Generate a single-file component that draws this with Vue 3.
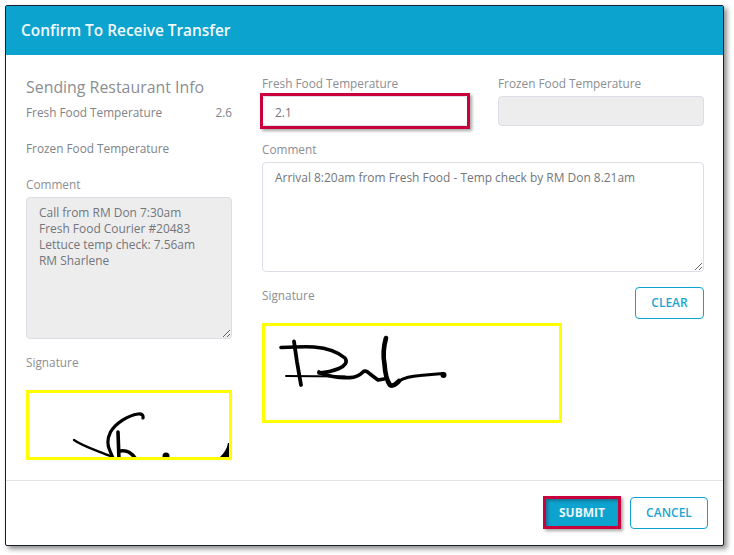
<script setup>
const sendingComment = `Call from RM Don 7:30am
Fresh Food Courier #20483
Lettuce temp check: 7.56am
RM Sharlene`
const receivingComment = 'Arrival 8:20am from Fresh Food - Temp check by RM Don 8.21am'
</script>

<template>
  <div class="page">
    <section class="dialog">
      <header class="head">Confirm To Receive Transfer</header>
      <div class="body">
        <div class="left">
          <h2 class="title">Sending Restaurant Info</h2>
          <div class="row first"><span>Fresh Food Temperature</span><span>2.6</span></div>
          <div class="row frozen"><span>Frozen Food Temperature</span></div>
          <label class="label comment-l">Comment</label>
          <textarea class="area area-left" readonly :value="sendingComment"></textarea>
          <label class="label sig-l">Signature</label>
          <div class="sig sig-small">
            <svg viewBox="29 393 200 64" width="200" height="64">
              <g fill="none" stroke="#000" stroke-linecap="round" stroke-linejoin="round">
                <path stroke-width="3.200" d="M143 418 C143.500 415 142 413.500 138 414 C128 415.500 116 423 110.500 432 C107 439 107.500 446 110 451 L113 458" />
                <path stroke-width="3.600" d="M118 432 L119 460" />
                <path stroke-width="2.200" d="M74 440 C82 446 98 451 110 456 L116 459" />
                <path stroke-width="3.600" d="M120 451 C126 450 131 452 135 458" />
              </g>
              <circle cx="166" cy="456" r="3.500" fill="#000" />
              <path d="M228 443 L229 443 L229 457 L220 457 C224 453 227 449 228 443 Z" fill="#000" />
            </svg>
          </div>
        </div>
        <div class="right">
          <div class="temps">
            <div>
              <label class="label">Fresh Food Temperature</label>
              <div class="marked">
                <input class="field" readonly value="2.1" />
                <span class="mark"></span>
              </div>
            </div>
            <div>
              <label class="label">Frozen Food Temperature</label>
              <div class="marked">
                <input class="field off" readonly />
              </div>
            </div>
          </div>
          <label class="label comment-r">Comment</label>
          <textarea class="area area-right" readonly :value="receivingComment"></textarea>
          <div class="sig-head">
            <label class="label sig-r">Signature</label>
            <button class="btn clear">CLEAR</button>
          </div>
          <div class="sig sig-big">
            <svg viewBox="265 326 294 94" width="294" height="94">
              <g fill="none" stroke="#000" stroke-linecap="round" stroke-linejoin="round">
                <path stroke-width="3.600" d="M281 347.500 C292 347 305 346.500 314 347 C326 348 338 352 345 358 C348 362 345 366 339 368.500 C333 371 326 372.500 319 373" />
                <path stroke-width="3.800" d="M294 341.500 L297 362 L301 385" />
                <path stroke-width="2" d="M286 376 L345 376.500" />
                <path stroke-width="3.600" d="M319 372 C325 376 340 378 348 377.500 C354 378 359 376 363 372 C365 370 367 371 370 374 L378 380 L384 379" />
                <path stroke-width="4.600" d="M386 338 C384 345 383 356 384.500 364 C385 372 387 381 390 385 C393 387 396 384 399 381" />
                <path stroke-width="3.200" d="M399 381 C404 378 412 376 420 375.500 L443 373.500" />
              </g>
              <circle cx="443.500" cy="375" r="3" fill="#000" />
            </svg>
          </div>
        </div>
      </div>
      <footer class="foot">
        <button class="btn submit">SUBMIT</button>
        <button class="btn cancel">CANCEL</button>
      </footer>
    </section>
  </div>
</template>

<style>
html, body { margin: 0; background: #fff; }
</style>

<style scoped>
.page {
  width: 734px;
  height: 555px;
  padding: 5px 0 0 5px;
  box-sizing: border-box;
  font-family: "Open Sans", "Noto Sans", sans-serif;
  overflow: hidden;
}
.dialog {
  width: 719px;
  height: 541px;
  box-sizing: border-box;
  border: 1px solid #1a2030;
  border-radius: 2px;
  box-shadow: 3px 3px 5px rgba(0, 0, 0, 0.45);
  background: #fff;
  display: flex;
  flex-direction: column;
}
.head {
  height: 49px;
  flex: none;
  box-sizing: border-box;
  padding-left: 15px;
  background: #0ca3cf;
  color: #f2fafd;
  font-size: 15.400px;
  font-weight: 600;
  line-height: 49px;
}
.body {
  flex: none;
  height: 425px;
  box-sizing: border-box;
  padding: 21px 19px 0 20px;
  display: grid;
  grid-template-columns: 206px 442px;
  column-gap: 30px;
}
.left, .right { display: flex; flex-direction: column; align-items: stretch; min-width: 0; }
.title {
  margin: 0;
  font-size: 15.900px;
  line-height: 22px;
  font-weight: 400;
  color: #8b8e92;
}
.row {
  display: flex;
  justify-content: space-between;
  font-size: 11.800px;
  line-height: 14px;
  margin-bottom: 2px;
  color: #808387;
}
.row.first { margin-top: 7px; }
.row.frozen { margin-top: 20px; }
.label {
  display: block;
  font-size: 11.800px;
  line-height: 14px;
  margin-bottom: 2px;
  color: #8b8e92;
}
.comment-l { margin-top: 20px; }
.sig-l { margin-top: 16px; }
.area {
  display: block;
  width: 100%;
  box-sizing: border-box;
  margin: 4px 0 0;
  padding: 7px 12px 6px;
  border: 1px solid #dcdde6;
  border-radius: 4px;
  font-family: inherit;
  font-size: 11.950px;
  line-height: 16px;
  color: #73767a;
  outline: none;
  resize: vertical;
}
.area-left { height: 142px; background: #ededee; }
.area-right { height: 110px; background: #fff; }
.sig {
  box-sizing: border-box;
  border: 3px solid #ffff00;
  background: #fff;
  overflow: hidden;
}
.sig svg { display: block; }
.sig-small { margin-top: 19px; width: 206px; height: 70px; }
.sig-big { margin-top: 4px; width: 300px; height: 100px; }
.temps {
  display: grid;
  grid-template-columns: 206px 206px;
  column-gap: 30px;
}
.marked { position: relative; margin-top: 6px; height: 30px; }
.field {
  display: block;
  width: 100%;
  height: 30px;
  box-sizing: border-box;
  padding: 2px 12px 0;
  border: 1px solid #dcdde6;
  border-radius: 4px;
  background: #fff;
  font-family: inherit;
  font-size: 11.950px;
  color: #73767a;
  outline: none;
}
.field.off { background: #ededee; }
.mark {
  position: absolute;
  left: -2px;
  top: -3px;
  width: 210px;
  height: 36px;
  box-sizing: border-box;
  border: 3.500px solid #c8003c;
  box-shadow: 2px 2px 3px rgba(0, 0, 0, 0.35);
  pointer-events: none;
}
.comment-r { margin-top: 16px; }
.sig-head {
  margin-top: 15px;
  display: flex;
  justify-content: space-between;
  align-items: flex-start;
}
.sig-r { padding-top: 1px; }
.btn {
  font-family: inherit;
  font-size: 12px;
  font-weight: 600;
  padding: 0 0 2px;
  box-sizing: border-box;
  border-radius: 4px;
  cursor: pointer;
}
.clear, .cancel {
  background: #fff;
  border: 1px solid #0ca3cf;
  color: #1ba6d2;
}
.clear { width: 69px; height: 32px; }
.foot {
  flex: 1;
  box-sizing: border-box;
  border-top: 1px solid #e2e3e6;
  padding: 0 15px 16px 0;
  display: flex;
  justify-content: flex-end;
  align-items: flex-end;
  gap: 9px;
}
.submit {
  width: 78px;
  height: 33px;
  padding: 0;
  border: 3px solid #c8003c;
  border-radius: 0;
  background: #0ca3cf;
  color: #eaf7fb;
  font-weight: 700;
  box-shadow: 2px 2px 3px rgba(0, 0, 0, 0.35), inset 2px 2px 3px rgba(40, 60, 80, 0.45);
}
.cancel { width: 78px; height: 32px; }
</style>
